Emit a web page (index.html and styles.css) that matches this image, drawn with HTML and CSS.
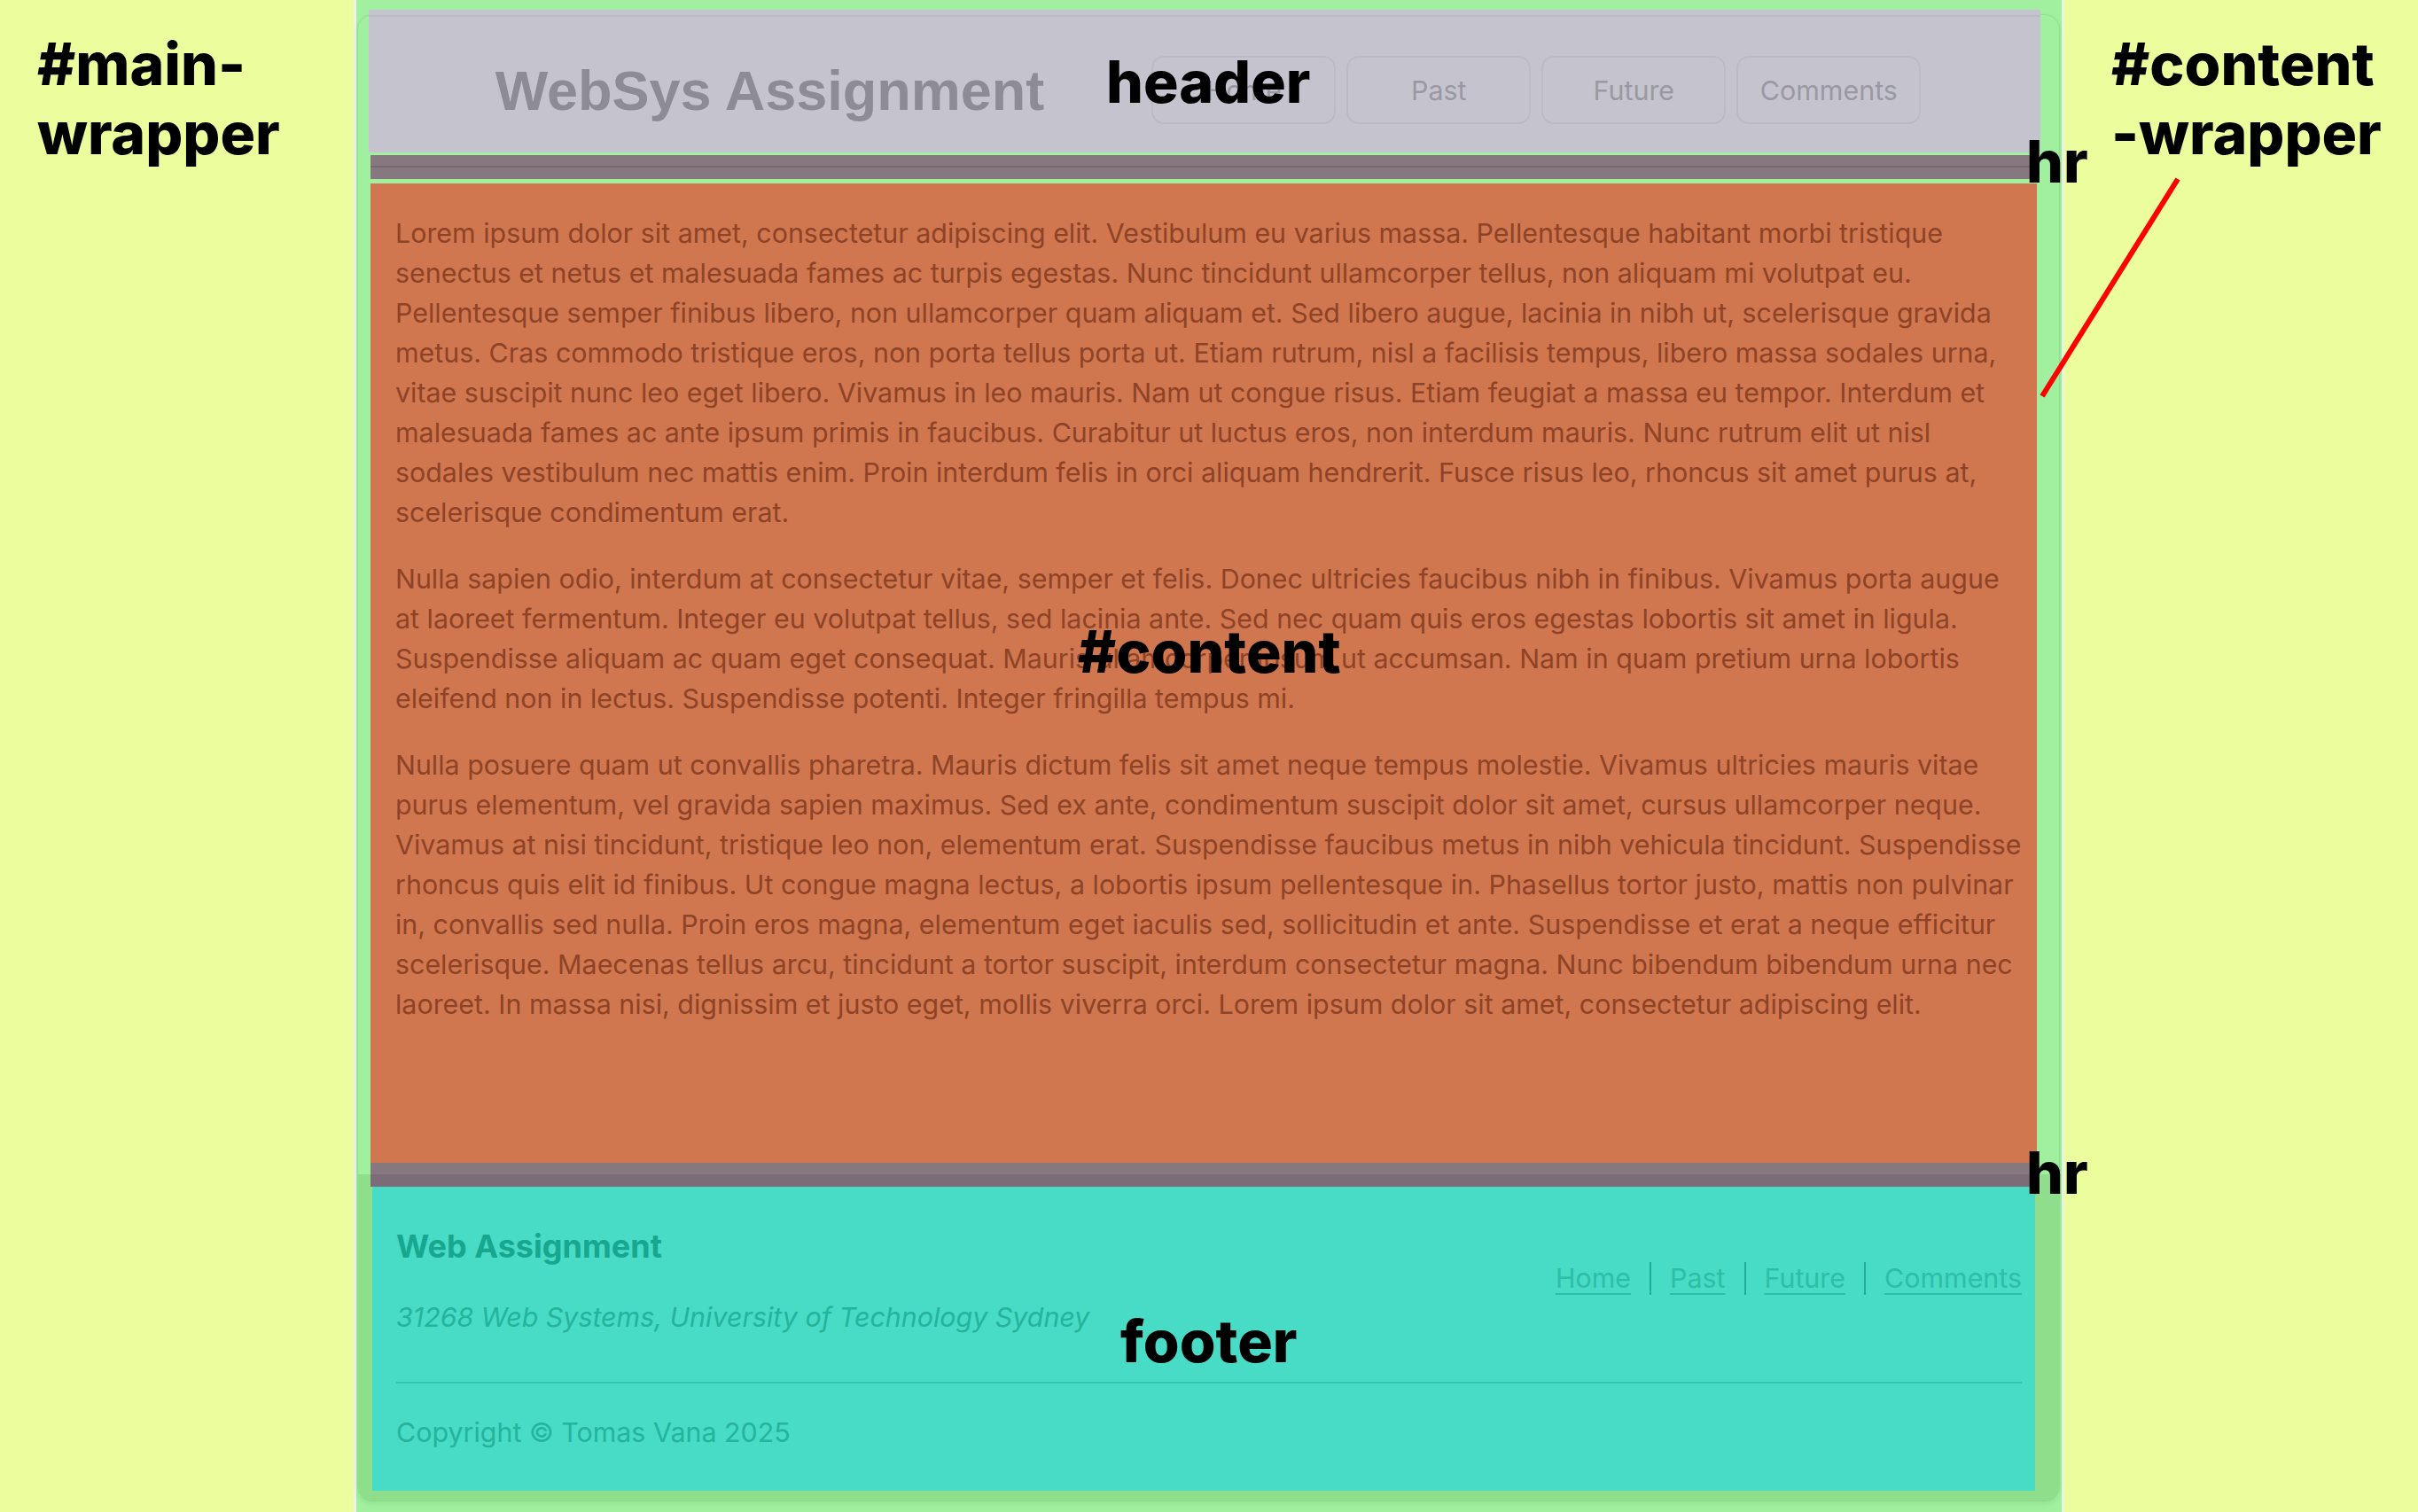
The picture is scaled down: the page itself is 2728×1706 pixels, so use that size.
FILE: index.html
```html
<!DOCTYPE html>
<html lang="en">
<head>
<meta charset="utf-8">
<title>WebSys Assignment</title>
<link rel="stylesheet" href="styles.css">
</head>
<body>
<div id="main-wrapper" class="main-wrapper">
  <div id="content-wrapper" class="content-wrapper">
    <header class="site-header">
      <h1 class="site-title">WebSys Assignment</h1>
      <nav class="main-nav">
        <a class="nav-btn" href="#">Home</a>
        <a class="nav-btn" href="#">Past</a>
        <a class="nav-btn" href="#">Future</a>
        <a class="nav-btn" href="#">Comments</a>
      </nav>
    </header>
    <hr class="rule rule-top">
    <main id="content" class="content">
      <p>Lorem ipsum dolor sit amet, consectetur adipiscing elit. Vestibulum eu varius massa. Pellentesque habitant morbi tristique senectus et netus et malesuada fames ac turpis egestas. Nunc tincidunt ullamcorper tellus, non aliquam mi volutpat eu. Pellentesque semper finibus libero, non ullamcorper quam aliquam et. Sed libero augue, lacinia in nibh ut, scelerisque gravida metus. Cras commodo tristique eros, non porta tellus porta ut. Etiam rutrum, nisl a facilisis tempus, libero massa sodales urna, vitae suscipit nunc leo eget libero. Vivamus in leo mauris. Nam ut congue risus. Etiam feugiat a massa eu tempor. Interdum et malesuada fames ac ante ipsum primis in faucibus. Curabitur ut luctus eros, non interdum mauris. Nunc rutrum elit ut nisl sodales vestibulum nec mattis enim. Proin interdum felis in orci aliquam hendrerit. Fusce risus leo, rhoncus sit amet purus at, scelerisque condimentum erat.</p>
      <p>Nulla sapien odio, interdum at consectetur vitae, semper et felis. Donec ultricies faucibus nibh in finibus. Vivamus porta augue at laoreet fermentum. Integer eu volutpat tellus, sed lacinia ante. Sed nec quam quis eros egestas lobortis sit amet in ligula. Suspendisse aliquam ac quam eget consequat. Mauris ullamcorper ipsum ut accumsan. Nam in quam pretium urna lobortis eleifend non in lectus. Suspendisse potenti. Integer fringilla tempus mi.</p>
      <p>Nulla posuere quam ut convallis pharetra. Mauris dictum felis sit amet neque tempus molestie. Vivamus ultricies mauris vitae purus elementum, vel gravida sapien maximus. Sed ex ante, condimentum suscipit dolor sit amet, cursus ullamcorper neque. Vivamus at nisi tincidunt, tristique leo non, elementum erat. Suspendisse faucibus metus in nibh vehicula tincidunt. Suspendisse rhoncus quis elit id finibus. Ut congue magna lectus, a lobortis ipsum pellentesque in. Phasellus tortor justo, mattis non pulvinar in, convallis sed nulla. Proin eros magna, elementum eget iaculis sed, sollicitudin et ante. Suspendisse et erat a neque efficitur scelerisque. Maecenas tellus arcu, tincidunt a tortor suscipit, interdum consectetur magna. Nunc bibendum bibendum urna nec laoreet. In massa nisi, dignissim et justo eget, mollis viverra orci. Lorem ipsum dolor sit amet, consectetur adipiscing elit.</p>
    </main>
    <hr class="rule rule-bottom">
    <div class="footer-zone">
      <footer class="site-footer">
        <div class="footer-top">
          <div class="footer-brand">
            <h3 class="footer-title">Web Assignment</h3>
            <p class="footer-sub">31268 Web Systems, University of Technology Sydney</p>
          </div>
          <ul class="footer-links">
            <li><a href="#">Home</a></li>
            <li><a href="#">Past</a></li>
            <li><a href="#">Future</a></li>
            <li><a href="#">Comments</a></li>
          </ul>
        </div>
        <div class="footer-divider"></div>
        <p class="copyright">Copyright © Tomas Vana 2025</p>
      </footer>
    </div>
  </div>
</div>

<div class="label label-main">#main-<br>wrapper</div>
<div class="label label-cw">#content<br>-wrapper</div>
<div class="label label-header">header</div>
<div class="label label-hr1">hr</div>
<div class="label label-content">#content</div>
<div class="label label-hr2">hr</div>
<div class="label label-footer">footer</div>
<svg class="pointer" width="170" height="260" viewBox="0 0 170 260" aria-hidden="true">
  <line x1="157" y1="4" x2="4" y2="249" stroke="#ff0000" stroke-width="6"/>
</svg>
</body>
</html>
```

FILE: styles.css
```css
* { box-sizing: border-box; }

html, body { margin: 0; padding: 0; }

body {
  position: relative;
  width: 2728px;
  height: 1706px;
  overflow: hidden;
  background: #ebfd9c;
  font-family: Inter, "Noto Sans", sans-serif;
}

.main-wrapper {
  width: 1930px;
  height: 1706px;
  margin: 0 auto;
  background: #a0f0a0;
  border-left: 3px solid #eef2ea;
  border-right: 3px solid #eef2ea;
  display: flex;
  flex-direction: column;
  padding: 17px 3px 13px 2px;
}

.content-wrapper {
  flex: 1;
  display: flex;
  flex-direction: column;
  border-radius: 16px;
  box-shadow: 0 0 0 1px rgba(70, 150, 70, 0.12), 0 3px 6px rgba(40, 110, 40, 0.12);
}

/* header */
.site-header {
  height: 161px;
  margin: -6px 21px 0 12px;
  padding: 20px 0 0 8px;
  display: flex;
  align-items: center;
  justify-content: center;
  gap: 121px;
  background: linear-gradient(#c5c4ce 0 6px, #bdbcc6 6px 8px, #c5c4ce 8px);
}

.site-title {
  margin: 0;
  font-family: "Liberation Sans", Arial, sans-serif;
  font-weight: 700;
  font-size: 63px;
  line-height: 72px;
  color: #8d8b95;
}

.main-nav {
  display: flex;
  gap: 12px;
}

.nav-btn {
  width: 208px;
  height: 77px;
  border: 2px solid #bcbac4;
  border-radius: 14px;
  display: flex;
  align-items: center;
  justify-content: center;
  font-size: 30.4px;
  color: #9a98a2;
  text-decoration: none;
}

/* rules */
.rule {
  border: 0;
  margin: 0 25px 0 14px;
  height: 27px;
  position: relative;
}

.rule-top {
  margin-top: 3px;
  background: #877880;
}

.rule-top::before {
  content: "";
  position: absolute;
  left: -14px;
  right: -13px;
  top: 12px;
  height: 2px;
  background: rgba(50, 40, 60, 0.2);
}

.rule-bottom {
  background: linear-gradient(#877880 0 13px, #7c6c78 13px);
  z-index: 1;
}

/* content */
.content {
  flex: 1;
  margin: 5px 25px 0 14px;
  background: #d07750;
  padding: 34px 14px 0 28px;
  color: #8e4326;
  font-size: 30.4px;
  line-height: 45px;
}

.content p {
  margin: 0 0 30px;
}

/* footer */
.footer-zone {
  margin-top: -14px;
  background: #8fde8c;
  border-radius: 0 0 16px 16px;
  padding: 14px 27px 11px 16px;
}

.site-footer {
  height: 343px;
  background: #48dbc6;
  padding: 45px 15px 43px 27px;
}

.footer-top {
  display: flex;
  justify-content: space-between;
  align-items: center;
}

.footer-title {
  margin: 0;
  font-size: 36px;
  line-height: 44px;
  font-weight: 700;
  color: #17a68e;
}

.footer-sub {
  margin: 36px 0 0;
  font-size: 30.4px;
  line-height: 45px;
  font-style: italic;
  color: #25b39c;
}

.footer-links {
  list-style: none;
  margin: 0 0 8px;
  padding: 0;
  display: flex;
}

.footer-links li {
  font-size: 30.4px;
  line-height: 37px;
  padding: 0 21px;
  border-left: 2px solid #20ae96;
}

.footer-links li:first-child {
  border-left: 0;
  padding-left: 0;
}

.footer-links li:last-child {
  padding-right: 0;
}

.footer-links a {
  color: #2ebea6;
  text-decoration: underline;
  text-underline-offset: 6px;
  text-decoration-thickness: 2px;
}

.footer-divider {
  margin-top: 50px;
  height: 2px;
  background: #31c7af;
}

.copyright {
  margin: 33px 0 0;
  font-size: 30.4px;
  line-height: 45px;
  color: #25b39c;
}

/* annotation labels */
.label {
  position: absolute;
  z-index: 2;
  font-family: Inter, "Noto Sans", sans-serif;
  font-weight: 800;
  font-size: 66px;
  line-height: 78px;
  color: #000;
  white-space: nowrap;
}

.label-main { left: 42px; top: 33px; }
.label-cw { left: 2382px; top: 33px; }
.label-header { left: 1248px; top: 53px; }
.label-hr1 { left: 2286px; top: 143px; }
.label-content { left: 1216px; top: 696px; }
.label-hr2 { left: 2286px; top: 1284px; }
.label-footer { left: 1264px; top: 1474px; }

.pointer {
  position: absolute;
  z-index: 2;
  left: 2300px;
  top: 198px;
}
```
